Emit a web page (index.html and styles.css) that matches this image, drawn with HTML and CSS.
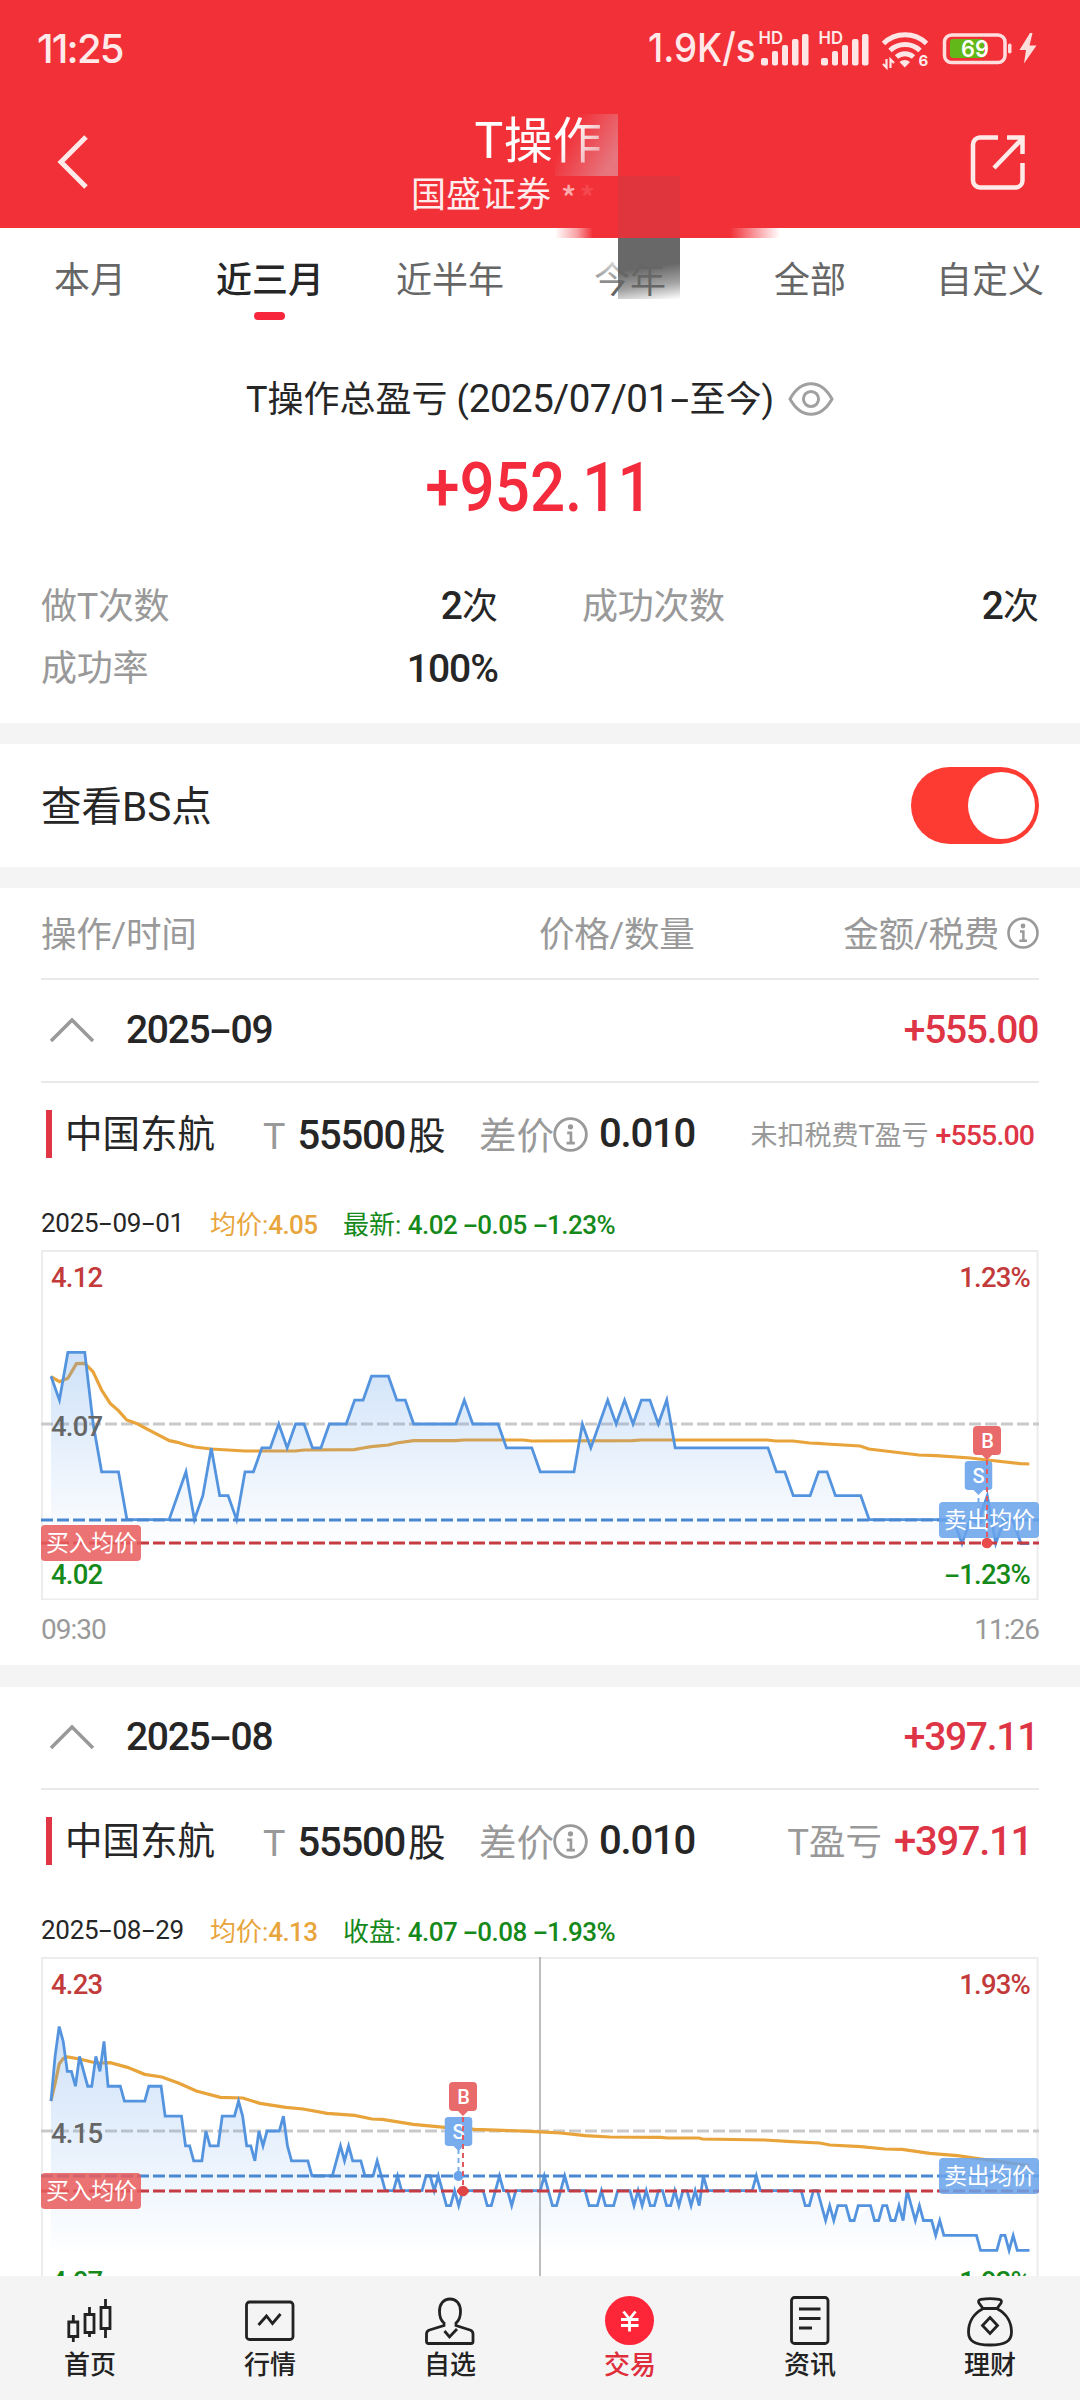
FILE: index.html
```
<!DOCTYPE html>
<html lang="zh-CN">
<head>
<meta charset="utf-8">
<title>T操作</title>
<link rel="stylesheet" href="styles.css">
</head>
<body>
<svg class="defs" aria-hidden="true">
  <defs>
    <linearGradient id="area" x1="0" y1="1" x2="0" y2="0">
      <stop offset="0" stop-color="#5b9bea" stop-opacity=".3"/>
      <stop offset=".6" stop-color="#5b9bea" stop-opacity=".12"/>
      <stop offset="1" stop-color="#5b9bea" stop-opacity=".01"/>
    </linearGradient>
    <symbol id="info" viewBox="0 0 32 32">
      <circle cx="16" cy="16" r="14.5" fill="none" stroke="#9a9a9a" stroke-width="2.6"/>
      <circle cx="16" cy="9" r="2.4" fill="#9a9a9a"/>
      <path d="M13 14.500h3.400v8.800M12.400 23.800h7.600" fill="none" stroke="#9a9a9a" stroke-width="2.500"/>
    </symbol>
    <symbol id="pin-b" viewBox="0 0 28 34">
      <path d="M4 0h20a4 4 0 0 1 4 4v21a4 4 0 0 1-4 4h-5l-5 5-5-5H4a4 4 0 0 1-4-4V4a4 4 0 0 1 4-4z" fill="#e96a6a"/>
      <text x="14.5" y="22" text-anchor="middle" class="pin-text">B</text>
    </symbol>
    <symbol id="pin-s" viewBox="0 0 28 34">
      <path d="M4 0h20a4 4 0 0 1 4 4v21a4 4 0 0 1-4 4h-5l-5 5-5-5H4a4 4 0 0 1-4-4V4a4 4 0 0 1 4-4z" fill="#78acec"/>
      <text x="14" y="22" text-anchor="middle" class="pin-text">S</text>
    </symbol>
  </defs>
</svg>

<div class="screen">
  <header class="header">
    <div class="status">
      <span class="clock">11:25</span>
      <svg class="status-icons" width="400" height="96" viewBox="640 0 400 96">
        <text x="648" y="62" textLength="107.500" lengthAdjust="spacingAndGlyphs" class="speed">1.9K/s</text>
        <g id="signal">
          <text x="758.500" y="44" textLength="24.500" lengthAdjust="spacingAndGlyphs" class="hd">HD</text>
          <g fill="#ffe6e6">
            <rect x="761" y="58" width="7" height="7.500" rx="2"/><rect x="772" y="51" width="6" height="14.500" rx="2"/><rect x="782" y="45" width="6" height="20.500" rx="2"/><rect x="792" y="39" width="6.500" height="26.500" rx="2"/><rect x="802" y="34" width="6.500" height="31.500" rx="2"/>
          </g>
        </g>
        <use href="#signal" x="60"/>
        <g fill="none" stroke="#ffe6e6" stroke-width="5">
          <path d="M883.500 43.500a31 31 0 0 1 43 0M890 50.500a22 22 0 0 1 30 0M896.500 57a12.500 12.500 0 0 1 17 0"/>
        </g>
        <path d="M899.500 62a8 8 0 0 1 10.500 0l-5.200 5.500z" fill="#ffe6e6"/>
        <path d="M886.500 59v8.500l-3.500-3.500M890.500 68v-8.500l3.500 3.500" fill="none" stroke="#ffe6e6" stroke-width="2.200"/>
        <text x="918.500" y="66" class="six">6</text>
        <rect x="950" y="39" width="34" height="19" rx="3" fill="#62b819"/>
        <rect x="944.500" y="35" width="60.500" height="27.500" rx="7" fill="none" stroke="#ffdede" stroke-width="3.500"/>
        <rect x="1008" y="43.500" width="3.500" height="10" rx="1.700" fill="#ffdede"/>
        <text x="961" y="57" textLength="28" lengthAdjust="spacingAndGlyphs" class="level">69</text>
        <path d="M1030 33l-10.500 17h6.500l-2 13.500 12.500-18h-7l3-12.500z" fill="#ffdede"/>
      </svg>
    </div>
    <div class="titlebar">
      <svg class="back" width="32" height="56" viewBox="0 0 32 56"><path d="M29 3L4 28l25 25" fill="none" stroke="#ffeaea" stroke-width="5"/></svg>
      <div class="titles">
        <h1>T操作</h1>
        <p>国盛证券<span class="stars"><i>*</i><i>*</i></span></p>
      </div>
      <svg class="share" width="56" height="58" viewBox="0 0 56 58" fill="none" stroke="#ffeaea" stroke-width="4.500">
        <path d="M28 4.500H10a7 7 0 0 0-7 7v36a7 7 0 0 0 7 7h36a7 7 0 0 0 6.500-7V30M24 35L51 7M37 4.500h15.500V21"/>
      </svg>
    </div>
    <div class="mask mask-title"></div>
    <div class="mask mask-name"></div>
    <div class="mask mask-edge"></div>
    <div class="mask mask-red"></div>
  </header>

  <main class="content">
    <nav class="tabs">
      <a>本月</a><a class="on">近三月</a><a>近半年</a><a class="dim">今年</a><a>全部</a><a>自定义</a>
    </nav>
    <section class="summary">
      <div class="caption"><span>T操作总盈亏 (<span class="num">2025/07/01<i class="dash">-</i></span>至今)</span>
        <svg width="46" height="34" viewBox="0 0 46 34" fill="none" stroke="#a0a0a0" stroke-width="3"><path d="M2 17C7 8 13.500 1.800 23 1.800S39 8 44 17C39 26 32.500 32.200 23 32.200S7 26 2 17z"/><circle cx="23" cy="17" r="7.600"/></svg>
      </div>
      <div class="total"><span>+952.11</span></div>
      <dl class="stats">
        <div><dt>做T次数</dt><dd><b>2</b>次</dd></div>
        <div><dt>成功次数</dt><dd><b>2</b>次</dd></div>
        <div><dt>成功率</dt><dd class="pct"><b>100%</b></dd></div>
      </dl>
    </section>
    <section class="switch-row"><span>查看BS点</span><span class="switch"></span></section>

    <div class="cols"><span>操作/时间</span><span>价格/数量</span><span>金额/税费<svg width="32" height="32"><use href="#info"/></svg></span></div>

    <section class="group">
      <div class="month">
        <svg width="46" height="26" viewBox="0 0 46 26"><path d="M2 24L23 3l21 21" fill="none" stroke="#999" stroke-width="3.500"/></svg>
        <span>2025<i class="dash">-</i>09</span><strong>+555.00</strong>
      </div>
      <div class="stock">
        <span class="name">中国东航</span>
        <span class="shares"><em>T</em><b>55500</b>股</span>
        <span class="spread"><em>差价</em><svg width="35" height="35"><use href="#info"/></svg><b>0.010</b></span>
        <span class="profit small"><em>未扣税费T盈亏</em><strong>+555.00</strong></span>
      </div>
      <div class="quote">
        <span class="date">2025<i class="dash">-</i>09<i class="dash">-</i>01</span>
        <span class="avg">均价:<b>4.05</b></span>
        <span class="last">最新: <b>4.02 <i class="dash">-</i>0.05 <i class="dash">-</i>1.23%</b></span>
      </div>
      <div class="chart">
        <svg width="998" height="350" viewBox="-1 0 998 350">
          <rect x="0" y="1" width="995.500" height="348.500" class="frame"/>
          <path d="M-1 174H997" class="mid"/>
          <g transform="translate(-42 -60) scale(.34435 .33333)">
            <polyline class="avg-line" points="148,560 173,575 197,565 222,521 246,520 270,545 295,600 320,640 344,662 368,690 400,702 440,724 492,752 516,757 540,765 565,771 613,777 711,783 858,783 883,780 1029,779 1054,774 1078,770 1128,765 1152,759 1201,752 1323,752 1347,750 1519,750 1544,753 1837,752 1862,750 2228,750 2253,753 2303,753 2351,759 2376,760 2400,762 2498,768 2523,777 2668,795 2718,797 2818,804 2868,810 2963,821 2989,822"/>
          </g>
          <g transform="translate(9 174) scale(8.435 -23.900)">
            <path fill="url(#area)" d="M0,-5 L0,2 1,1 2,3 4,3 5,0 6,-2 8,-2 9,-4 14,-4 16,-2 17,-4 18,-3 19,-1 20,-3 21,-3 22,-4 23,-2 24,-2 25,-1 26,-1 27,0 28,-1 29,0 30,0 31,-1 32,-1 33,0 35,0 36,1 37,1 38,2 40,2 41,1 42,1 43,0 48,0 49,1 50,0 53,0 54,-1 57,-1 58,-2 62,-2 63,0 64,-1 65,0 66,1 67,0 68,1 69,0 70,1 71,1 72,0 73,1 74,-1 85,-1 86,-2 87,-2 88,-3 90,-3 91,-2 92,-2 93,-3 96,-3 97,-4 107,-4 108,-5 109,-4 110,-4 111,-3 112,-5 113,-4 114,-4 115,-5 116,-5z"/>
            <polyline class="price-line" points="0,2 1,1 2,3 4,3 5,0 6,-2 8,-2 9,-4 14,-4 16,-2 17,-4 18,-3 19,-1 20,-3 21,-3 22,-4 23,-2 24,-2 25,-1 26,-1 27,0 28,-1 29,0 30,0 31,-1 32,-1 33,0 35,0 36,1 37,1 38,2 40,2 41,1 42,1 43,0 48,0 49,1 50,0 53,0 54,-1 57,-1 58,-2 62,-2 63,0 64,-1 65,0 66,1 67,0 68,1 69,0 70,1 71,1 72,0 73,1 74,-1 85,-1 86,-2 87,-2 88,-3 90,-3 91,-2 92,-2 93,-3 96,-3 97,-4 107,-4 108,-5 109,-4 110,-4 111,-3 112,-5 113,-4 114,-4 115,-5 116,-5"/>
          </g>
          <path d="M-1 270H997" class="sell-line"/>
          <path d="M-1 293H997" class="buy-line"/>
          <path d="M936.500 239V270" class="drop s"/><circle cx="936.500" cy="270" r="5" fill="#5b9be6"/>
          <use href="#pin-s" x="922.500" y="211" width="28" height="34"/>
          <g class="tag"><rect x="-1" y="275" width="100" height="36" rx="4" fill="#e95c5c"/><text x="4" y="301" textLength="91">买入均价</text></g>
          <g class="tag"><rect x="897" y="252" width="100" height="36" rx="4" fill="#69a3ea"/><text x="902" y="278" textLength="91">卖出均价</text></g>
          <path d="M945 210V293" class="drop b"/><circle cx="945" cy="293" r="5.300" fill="#e94b4b"/>
          <use href="#pin-b" x="931" y="176" width="28" height="34"/>
        </svg>
        <span class="lab up left">4.12</span><span class="lab up right">1.23%</span>
        <span class="lab flat left">4.07</span>
        <span class="lab down left">4.02</span><span class="lab down right"><i class="dash">-</i>1.23%</span>
      </div>
      <div class="times"><span>09:30</span><span>11:26</span></div>
    </section>

    <section class="group">
      <div class="month">
        <svg width="46" height="26" viewBox="0 0 46 26"><path d="M2 24L23 3l21 21" fill="none" stroke="#999" stroke-width="3.500"/></svg>
        <span>2025<i class="dash">-</i>08</span><strong>+397.11</strong>
      </div>
      <div class="stock">
        <span class="name">中国东航</span>
        <span class="shares"><em>T</em><b>55500</b>股</span>
        <span class="spread"><em>差价</em><svg width="35" height="35"><use href="#info"/></svg><b>0.010</b></span>
        <span class="profit"><em>T盈亏</em><strong>+397.11</strong></span>
      </div>
      <div class="quote">
        <span class="date">2025<i class="dash">-</i>08<i class="dash">-</i>29</span>
        <span class="avg">均价:<b>4.13</b></span>
        <span class="last">收盘: <b>4.07 <i class="dash">-</i>0.08 <i class="dash">-</i>1.93%</b></span>
      </div>
      <div class="chart">
        <svg width="998" height="350" viewBox="-1 0 998 350">
          <rect x="0" y="1" width="995.500" height="348.500" class="frame"/>
          <path d="M498 0V350" stroke="#bdbdbd" stroke-width="2"/>
          <path d="M-1 174H997" class="mid"/>
          <g transform="translate(-42 -17) scale(.34435 .33333)">
            <polyline class="avg-line" points="148,483 160,430 172,372 184,355 196,351 231,357 267,366 290,369 320,368 370,382 420,403 470,411 520,430 570,453 640,472 705,474 755,490 830,502 880,507 950,520 1030,526 1080,537 1110,538 1200,553 1300,563 1380,568 1540,574 1628,579 1700,587 1770,591 1918,592 1940,594 2030,594 2040,597 2220,600 2300,605 2380,609 2410,615 2500,620 2570,627 2620,628 2700,640 2780,647 2850,657 2900,664 2988,677"/>
          </g>
          <g transform="translate(9 174) scale(4.077 -14.920)">
            <path fill="url(#area)" d="M0,-8 L0,2 1,5 2,7 3,6 4,4 5,4 6,3 7,5 8,4 9,3 10,3 11,5 12,4 13,6 14,3 17,3 18,2 23,2 24,3 27,3 28,1 32,1 33,-1 34,-1 35,-2 37,-2 38,0 39,-1 41,-1 42,1 45,1 46,2 47,1 48,-1 49,-1 50,-2 51,0 52,-1 53,0 56,0 57,1 58,-1 59,-2 63,-2 64,-3 69,-3 71,-1 72,-2 73,-1 74,-2 76,-2 77,-3 79,-3 80,-2 82,-4 84,-4 85,-3 86,-4 91,-4 92,-3 93,-3 94,-4 95,-3 97,-5 98,-5 99,-4 100,-5 101,-4 106,-4 107,-5 108,-5 110,-3 111,-4 112,-4 113,-5 114,-4 120,-4 121,-3 123,-5 124,-5 126,-3 127,-4 131,-4 132,-5 134,-5 135,-4 136,-5 138,-5 139,-4 142,-4 160,-4 184,-4 185,-5 188,-4 190,-6 195,-5 197,-6 201,-5 207,-6 210,-4 212,-6 216,-6 219,-7 227,-7 228,-8 240,-8z"/>
            <polyline class="price-line" points="0,2 1,5 2,7 3,6 4,4 5,4 6,3 7,5 8,4 9,3 10,3 11,5 12,4 13,6 14,3 17,3 18,2 23,2 24,3 27,3 28,1 32,1 33,-1 34,-1 35,-2 37,-2 38,0 39,-1 41,-1 42,1 45,1 46,2 47,1 48,-1 49,-1 50,-2 51,0 52,-1 53,0 56,0 57,1 58,-1 59,-2 63,-2 64,-3 69,-3 71,-1 72,-2 73,-1 74,-2 76,-2 77,-3 79,-3 80,-2 82,-4 84,-4 85,-3 86,-4 91,-4 92,-3 93,-3 94,-4 95,-3 97,-5 98,-5 99,-4 100,-5 101,-4 106,-4 107,-5 108,-5 110,-3 111,-4 112,-4 113,-5 114,-4 120,-4 121,-3 123,-5 124,-5 126,-3 127,-4 131,-4 132,-5 134,-5 135,-4 136,-5 138,-5 139,-4 142,-4 143,-5 144,-4 145,-5 146,-4 147,-5 148,-5 149,-4 150,-4 151,-5 152,-5 153,-4 154,-5 155,-4 156,-4 157,-5 158,-4 159,-5 160,-3 161,-4 172,-4 173,-3 174,-4 184,-4 185,-5 186,-5 187,-4 188,-4 190,-6 191,-5 192,-6 193,-5 195,-5 196,-6 197,-6 198,-5 201,-5 202,-6 203,-6 204,-5 205,-5 206,-6 207,-6 208,-5 209,-6 210,-4 212,-6 213,-5 214,-6 216,-6 217,-7 218,-6 219,-7 227,-7 228,-8 232,-8 233,-7 234,-7 235,-8 236,-7 237,-8 240,-8"/>
          </g>
          <path d="M-1 219H997" class="sell-line"/>
          <path d="M-1 234H997" class="buy-line"/>
          <path d="M416.500 192V219" class="drop s"/><circle cx="416.500" cy="219" r="5" fill="#69a3ea"/>
          <use href="#pin-s" x="402.500" y="160" width="28" height="34"/>
          <path d="M421 160V234" class="drop b"/><circle cx="421" cy="234" r="5.300" fill="#e04545"/>
          <use href="#pin-b" x="407" y="125" width="28" height="34"/>
          <g class="tag"><rect x="-1" y="216" width="100" height="36" rx="4" fill="#e95c5c"/><text x="4" y="242" textLength="91">买入均价</text></g>
          <g class="tag"><rect x="897" y="201" width="100" height="36" rx="4" fill="#69a3ea"/><text x="902" y="227" textLength="91">卖出均价</text></g>
        </svg>
        <span class="lab up left">4.23</span><span class="lab up right">1.93%</span>
        <span class="lab flat left">4.15</span>
        <span class="lab down left">4.07</span><span class="lab down right"><i class="dash">-</i>1.93%</span>
      </div>
    </section>
  </main>

  <footer class="tabbar">
    <a><svg viewBox="0 0 60 56"><path d="M8.800 30h9v14.500h-9zM13.300 23v7M13.300 44.500V50M25 22.500h9V40.500h-9zM29.500 15v7.500M29.500 40.500V45M41 15.500h9V36.500h-9zM45.500 7v8.500M45.500 36.500V46"/></svg>首页</a>
    <a><svg viewBox="0 0 60 56"><rect x="6.500" y="10" width="46.500" height="37.500" rx="3"/><path d="M18.500 33l8-9 6 7.500 8-9.500"/></svg>行情</a>
    <a><svg viewBox="0 0 60 56"><path d="M24 31c-3-2.500-4.500-6-4.500-11.500C19.500 12 23.500 7 30 7s10.500 5 10.500 12.500C40.500 25 39 28.500 36 31v2.500l14 4.500q3 1 3 4v7.500q0 2-2 2H8.500q-2 0-2-2V42q0-3 3-4L24 33.500zM24.500 39l5 6 7.500-8"/></svg>自选</a>
    <a class="on"><svg viewBox="0 0 60 56"><circle cx="29.500" cy="28.500" r="24.500" fill="#fd2638" stroke="none"/><path d="M23.500 19.500l6 7.500 6-7.500M21 27.500h17.500M21 33.500h17.500M29.500 27v12.500" stroke="#fff"/></svg>交易</a>
    <a><svg viewBox="0 0 60 56"><rect x="11.500" y="5.500" width="36.500" height="46" rx="3"/><path d="M19 17h21.500M19 26.500h21.500M19 36h13"/></svg>资讯</a>
    <a><svg viewBox="0 0 60 56"><path d="M23 16.500l-4-5.500q-1.500-3 2-3.700 9-1.300 18 0 3.500.7 2 3.700l-4 5.500zM22.500 17C13 22 8.500 31 8.500 40c0 9 6 13 21.500 13s21.500-4 21.500-13c0-9-4.500-18-14-23M30 25.500l7.500 8-7.500 8-7.500-8z"/></svg>理财</a>
  </footer>
</div>
</body>
</html>
```
FILE: styles.css
```
* { box-sizing: border-box; margin: 0; padding: 0; }
body {
  width: 1080px;
  font-family: Roboto, "Noto Sans CJK SC", sans-serif;
  font-size: 36px;
  color: #262626;
  background: #fff;
}
i, em { font-style: normal; }
b, strong { font-weight: 500; }
a { color: inherit; text-decoration: none; }
svg { display: block; flex: none; }
.defs { position: absolute; width: 0; height: 0; }
.screen { height: 2400px; display: flex; flex-direction: column; overflow: hidden; }
.dash { display: inline-block; width: .54em; text-align: center; transform: scaleX(1.75); }

/* header */
.header { position: relative; height: 228px; flex: none; background: #f23038; color: #fff; }
.status { height: 96px; display: flex; justify-content: space-between; padding: 0 40px 0 37px; }
.clock { font: 500 40px/97px Inter, sans-serif; letter-spacing: -1.8px; color: #ffe9e9; }
.speed { font: 500 40px Inter, sans-serif; fill: #ffe9e9; }
.hd { font: 600 17px Inter, sans-serif; fill: #ffe9e9; }
.six { font: 700 15px Inter, sans-serif; fill: #ffe9e9; }
.level { font: 600 23px Inter, sans-serif; fill: #fff; }
.titlebar { height: 132px; display: flex; justify-content: space-between; padding: 0 54px 0 57px; }
.back { margin-top: 38px; }
.share { margin: 37px 0 0; }
.titles { width: 400px; margin-left: 17px; padding-top: 6px; display: flex; flex-direction: column; align-items: center; }
.titles h1 { font: 400 49px/70px "Noto Sans CJK SC", sans-serif; }
.titles p { align-self: flex-start; margin: -2px 0 0 73px; font: 400 35px/44px "Noto Sans CJK SC", sans-serif; color: #ffecec; white-space: nowrap; }
.stars { margin-left: 10px; font: 500 32px/1 "Noto Sans CJK SC", sans-serif; letter-spacing: 3px; color: #fbaaad; }
.stars i { position: relative; top: 3px; }
.stars i + i { opacity: .2; }
.mask { position: absolute; }
.mask-title { left: 555px; top: 114px; width: 63px; height: 62px; background: linear-gradient(120deg, rgba(242,48,56,0) 25%, rgba(229,125,133,.9) 85%); }
.mask-name { left: 555px; top: 228px; width: 63px; height: 10px; background: linear-gradient(90deg, #fff 0, #f9a0a3 35%, #f23038 60%); }
.mask-edge { left: 680px; top: 228px; width: 100px; height: 10px; background: linear-gradient(90deg, #f23038 50%, #fff); }
.mask-red { left: 618px; top: 176px; width: 62px; height: 62px; background: #e1353d; }

/* range tabs */
.content { height: 2048px; overflow: hidden; }
.tabs { display: grid; grid-template-columns: repeat(6, 180px); height: 102px; font: 36px/99px "Noto Sans CJK SC", sans-serif; color: #666; text-align: center; }
.tabs a { position: relative; }
.tabs .on { font-weight: 500; color: #262626; }
.tabs .on::after { content: ""; position: absolute; left: 74px; bottom: 10px; width: 31px; height: 8px; border-radius: 4px; background: #f8263c; }
.tabs .dim { background: linear-gradient(172deg, #686868 0 48%, #a4a4a4 76%, #fff 100%) 78px 10px / 62px 61px no-repeat; }
.tabs .dim::before { content: ""; position: absolute; left: 50px; top: 30px; width: 28px; height: 30px; background: linear-gradient(rgba(255,255,255,.85), rgba(255,255,255,.1)); }

/* summary */
.summary { height: 432px; margin-top: -39px; padding-top: 39px; }
.caption { height: 60px; margin-top: 39px; display: flex; align-items: center; justify-content: center; gap: 14px; white-space: nowrap; }
.caption > span { margin-top: -6px; }
.caption .num { font-size: 38.500px; letter-spacing: -.5px; }
.total { margin-top: 19px; height: 80px; text-align: center; font-size: 68px; line-height: 80px; font-weight: 500; color: #f32b3d; }
.total span { display: inline-block; transform: translateX(-1px) scaleX(.91); }
.stats { margin: 46px 41px 0; display: grid; grid-template-columns: 457px 457px; column-gap: 84px; grid-auto-rows: 62px; align-items: center; }
.stats div { display: flex; justify-content: space-between; align-items: center; }
.stats dt { margin-top: -4px; color: #999; letter-spacing: -.3px; }
.stats dd { margin-top: -5px; }
.stats .pct { margin-top: 3px; }
.stats b { font-size: 39px; letter-spacing: -1px; }

.switch-row { height: 165px; border: solid #f4f4f4; border-width: 21px 0; padding: 0 41px; display: flex; align-items: center; justify-content: space-between; font-size: 40.500px; }
.switch-row > span:first-child { margin-top: -5px; }
.switch { width: 128px; height: 77px; padding: 5px 4px; border-radius: 39px; background: #fd3b33; }
.switch::after { content: ""; display: block; width: 67px; height: 67px; margin-left: auto; border-radius: 50%; background: #fff; }

/* records */
.cols { height: 92px; margin: 0 41px; padding-bottom: 3px; border-bottom: 2px solid #e9e9e9; display: grid; grid-template-columns: 498px 1fr auto; align-items: center; font-size: 35.500px; letter-spacing: -.2px; color: #999; }
.cols span { display: flex; align-items: center; gap: 8px; }
.cols svg { margin-top: 3px; }
.month { height: 103px; margin: 0 41px; padding: 0 1px 2px 8px; border-bottom: 2px solid #e9e9e9; display: flex; align-items: center; font-size: 39px; font-weight: 500; letter-spacing: -1.300px; }
.month span { margin-left: 31px; }
.month strong { margin-left: auto; color: #de3546; }
.stock { height: 102px; padding: 0 46px; display: grid; grid-template-columns: 217px 216px 1fr auto; align-items: center; font-size: 37.500px; white-space: nowrap; }
.name { padding-left: 13px; height: 48px; line-height: 48px; border-left: 6px solid #e03545; }
.stock em { color: #999; }
.stock b { font-size: 40px; letter-spacing: -1.200px; }
.shares { margin-top: -4px; }
.shares em { margin-right: 12px; }
.shares b { margin-right: 3px; }
.spread { display: flex; align-items: center; }
.spread em { margin-top: -4px; }
.spread b { margin-top: -2px; }
.spread svg { margin: 0 11px 0 -1px; }
.profit { padding-right: 2px; margin-top: -4px; }
.profit em { font-size: 36.500px; }
.profit strong { margin-left: 12px; font-size: 40px; letter-spacing: -1.300px; color: #de3546; }
.profit.small { padding-right: 0; }
.profit.small em { font-size: 27px; }
.profit.small strong { margin-left: 7px; font-size: 28.500px; letter-spacing: -.9px; }
.quote { height: 65px; padding: 10px 40px 0; display: flex; align-items: center; font-size: 26px; white-space: nowrap; }
.quote .date { width: 170px; padding-left: 1px; letter-spacing: -.25px; }
.quote .avg { width: 133px; color: #e8a53c; }
.quote .last { color: #15891a; }
.quote b { letter-spacing: -.6px; }
.quote .last b { letter-spacing: -.5px; }

.chart { position: relative; width: 998px; height: 350px; margin: 0 41px; }
.lab { position: absolute; font-size: 27.500px; line-height: 32px; font-weight: 500; letter-spacing: -.8px; }
.left { left: 10px; }
.right { right: 9px; }
.up { top: 12px; color: #c23a3a; }
.flat { top: 161px; color: #666; }
.down { top: 309px; color: #15891a; }
.frame { fill: none; stroke: #ececec; stroke-width: 2; }
.mid { stroke: #c9c9c9; stroke-width: 3; stroke-dasharray: 12 4; }
.avg-line { fill: none; stroke: #e8a33a; stroke-width: 3.2; vector-effect: non-scaling-stroke; }
.price-line { fill: none; stroke: #5494de; stroke-width: 2.8; vector-effect: non-scaling-stroke; }
.sell-line { stroke: #4a88d2; stroke-width: 3; stroke-dasharray: 12 4; }
.buy-line { stroke: #c53b42; stroke-width: 3; stroke-dasharray: 12 4; }
.drop { stroke-width: 2; stroke-dasharray: 5 4; }
.drop.s { stroke: #78acec; }
.drop.b { stroke: #e05a62; }
.pin-text { font: 500 20px Roboto, sans-serif; fill: #fff; }
.tag rect { opacity: .86; }
.tag text { font: 23px "Noto Sans CJK SC", sans-serif; fill: #fff; }
.times { height: 87px; border-bottom: 22px solid #f4f4f4; padding: 0 41px; line-height: 60px; display: flex; justify-content: space-between; font-size: 28px; letter-spacing: -1px; color: #999; }

/* bottom bar */
.tabbar { height: 124px; padding-top: 16px; background: #f4f4f4; display: grid; grid-template-columns: repeat(6, 180px); font: 500 26px/29px "Noto Sans CJK SC", sans-serif; color: #222; }
.tabbar a { display: flex; flex-direction: column; align-items: center; }
.tabbar svg { width: 60px; height: 56px; fill: none; stroke: #222; stroke-width: 2.8; }
.tabbar .on { color: #e02d3c; }
```
